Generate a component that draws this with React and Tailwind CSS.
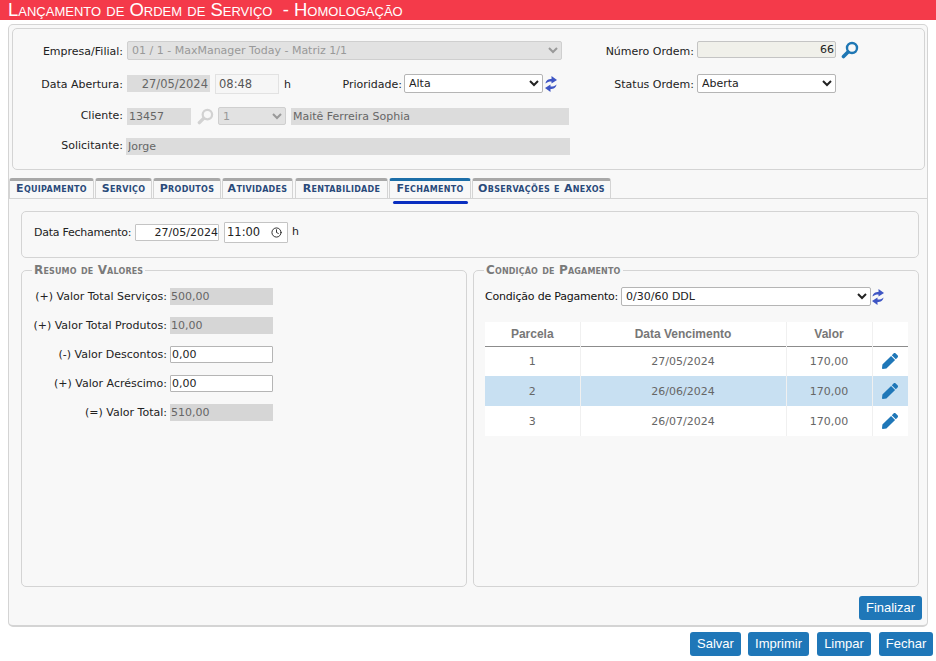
import { FaPen } from 'react-icons/fa';
import { Clock } from 'lucide-react';

const labelCls = 'text-right shrink-0 text-[#222] whitespace-nowrap';
const disabledCls = 'bg-[#dcdcdc] text-[#666] px-[2px] outline-none';
const selectCls = 'h-[19px] bg-white border border-[#b5b5b5] rounded-[2px] text-[#222] outline-none';

function Lens({ className, color = '#1f77b4' }) {
  return (
    <svg viewBox="0 0 18 18" className={className} fill="none">
      <circle cx="11" cy="7" r="5" stroke={color} strokeWidth="2.4" />
      <path d="M7 11 L2.5 15.5" stroke={color} strokeWidth="3.6" strokeLinecap="round" />
    </svg>
  );
}

function Refresh({ className }) {
  return (
    <svg viewBox="0 0 12 16" className={className} fill="#3f56c4">
      <path d="M0.5 7.6 C0.8 4.4 3.5 3 6.5 3 L6.5 0 L12 3.9 L6.5 7.4 L6.5 5.4 C4 5.4 2 6 0.5 7.6 Z" />
      <path d="M0.5 7.6 C0.8 4.4 3.5 3 6.5 3 L6.5 0 L12 3.9 L6.5 7.4 L6.5 5.4 C4 5.4 2 6 0.5 7.6 Z" transform="rotate(180 6 8)" />
    </svg>
  );
}

function Tab({ label, active, width }) {
  return (
    <div
      className={`relative h-[20px] flex items-center justify-center bg-[#f8f8f8] border border-b-0 border-[#d4d4d4] border-t-[3px] rounded-t-[3px] font-bold text-[#2a4a7a] [font-variant:small-caps] text-[11px] tracking-[0.3px] ${active ? 'border-t-[#1c6ea8]' : 'border-t-[#a8a8a8]'} ${width}`}
    >
      <span className="-mt-[1px]">{label}</span>
      {active && <div className="absolute left-[3px] right-[2px] top-[20px] h-[3px] rounded-[2px] bg-[#0a2fc0]" />}
    </div>
  );
}

function Btn({ children, className = '' }) {
  return (
    <button className={`h-[24px] rounded-[3px] bg-[#1f77b8] text-white text-[13px] [font-family:'Liberation_Sans',sans-serif] ${className}`}>
      {children}
    </button>
  );
}

function Fieldset({ title, className, children }) {
  return (
    <fieldset className={`border border-[#d4d4d4] rounded-[5px] ${className}`}>
      <legend className="ml-[10px] px-[2px] text-[12px] leading-[13px] font-bold text-[#7a7a7a] [font-variant:small-caps] tracking-[0.15px]">{title}</legend>
      {children}
    </fieldset>
  );
}

function ValueRow({ label, value, editable }) {
  return (
    <div className="h-[18px] flex items-center gap-[3px]">
      <span className={`${labelCls} w-[145px] pt-[1px]`}>{label}</span>
      <input
        readOnly
        value={value}
        className={`w-[103px] h-[17px] px-[1px] outline-none ${editable ? 'bg-white border border-[#b5b5b5] rounded-[1px] text-[#222]' : 'bg-[#d6d6d6] text-[#666]'}`}
      />
    </div>
  );
}

const rows = [
  { n: '1', d: '27/05/2024' },
  { n: '2', d: '26/06/2024', hi: true },
  { n: '3', d: '26/07/2024' },
];

export default function App() {
  return (
    <div className="w-[936px] h-[661px] bg-white overflow-hidden text-[11px] leading-[14px] [font-family:'DejaVu_Sans',sans-serif]">
      <div className="h-[20px] bg-[#f43a4a] pl-[8px] text-white text-[18.5px] leading-[20px] [font-variant:small-caps] [font-family:'Liberation_Sans',sans-serif] whitespace-pre">
        Lançamento de Ordem de Serviço  - Homologação
      </div>

      <div className="mt-[4px] ml-[8px] w-[920px] h-[603px] border border-[#d4d4d4] border-b-2 rounded-[5px] bg-[#f8f8f8] pt-[3px]">
        <div className="ml-[3px] w-[913px] h-[142px] border border-[#d4d4d4] rounded-[5px] pt-[12px] flex flex-col">
          <div className="flex items-start h-[19px]">
            <span className={`${labelCls} w-[110px] pt-[4px]`}>Empresa/Filial:</span>
            <select disabled className="ml-[4px] w-[435px] h-[19px] bg-[#e2e2e2] border border-[#cfcfcf] rounded-[2px] text-[#999] outline-none">
              <option>01 / 1 - MaxManager Today - Matriz 1/1</option>
            </select>
            <span className={`${labelCls} w-[132px] pt-[4px]`}>Número Ordem:</span>
            <input readOnly value="66" className="ml-[3px] w-[139px] h-[17px] bg-[#f0f0ea] border border-[#c4c4c4] rounded-[2px] text-right pr-[1px] text-[#222] outline-none" />
            <Lens className="ml-[5px] w-[18px] h-[18px]" />
          </div>

          <div className="mt-[14px] flex items-center h-[19px]">
            <span className={`${labelCls} w-[110px] pt-[2px]`}>Data Abertura:</span>
            <input readOnly value="27/05/2024" className={`ml-[4px] w-[83px] h-[17px] text-right text-[11.5px] ${disabledCls}`} />
            <input readOnly value="08:48" className="ml-[5px] w-[64px] h-[20px] px-[3px] bg-[#f6f6f6] border border-[#e2e2e2] text-[#555] text-[11.5px] outline-none" />
            <span className="ml-[5px] w-[14px] text-[#222] pt-[2px]">h</span>
            <span className={`${labelCls} w-[104px] pt-[2px]`}>Prioridade:</span>
            <select className={`ml-[2px] w-[139px] ${selectCls}`}>
              <option>Alta</option>
            </select>
            <Refresh className="ml-[2px] w-[12px] h-[16px]" />
            <span className={`${labelCls} w-[137px] pt-[2px]`}>Status Ordem:</span>
            <select className={`ml-[3px] w-[139px] ${selectCls}`}>
              <option>Aberta</option>
            </select>
          </div>

          <div className="mt-[14px] flex items-center h-[18px]">
            <span className={`${labelCls} w-[110px]`}>Cliente:</span>
            <input readOnly value="13457" className={`ml-[4px] w-[64px] h-[17px] ${disabledCls}`} />
            <Lens className="ml-[6px] w-[17px] h-[17px]" color="#d2d2d2" />
            <select disabled className="ml-[4px] w-[68px] h-[18px] bg-[#e2e2e2] border border-[#cfcfcf] rounded-[2px] text-[#999] outline-none">
              <option>1</option>
            </select>
            <input readOnly value="Maitê Ferreira Sophia" className={`ml-[5px] w-[278px] h-[17px] ${disabledCls}`} />
          </div>

          <div className="mt-[12px] flex items-center h-[18px]">
            <span className={`${labelCls} w-[110px]`}>Solicitante:</span>
            <input readOnly value="Jorge" className={`ml-[3px] w-[444px] h-[17px] ${disabledCls}`} />
          </div>
        </div>

        <div className="mt-[8px] flex gap-[1px] border-b border-[#d4d4d4] h-[21px]">
          <Tab label="Equipamento" width="w-[85px]" />
          <Tab label="Serviço" width="w-[57px]" />
          <Tab label="Produtos" width="w-[68px]" />
          <Tab label="Atividades" width="w-[71px]" />
          <Tab label="Rentabilidade" width="w-[93px] ml-[1px]" />
          <Tab label="Fechamento" width="w-[82px]" active />
          <Tab label="Observações e Anexos" width="w-[139px]" />
        </div>

        <div className="pt-[12px] pl-[12px] pr-[8px]">
          <div className="w-[898px] h-[47px] border border-[#d4d4d4] rounded-[5px] flex items-center pl-[12px] pb-[5px]">
            <span className="w-[98px] shrink-0 pt-[2px] text-[#222] whitespace-nowrap tracking-[-0.25px]">Data Fechamento:</span>
            <input readOnly value="27/05/2024" className="ml-[3px] w-[84px] h-[17px] bg-white border border-[#c4c4c4] rounded-[1px] text-right text-[#222] outline-none" />
            <div className="ml-[5px] w-[64px] h-[21px] bg-white border border-[#c4c4c4] rounded-[1px] flex items-center justify-between px-[2px] text-[#222] text-[11.5px]">
              <span>11:00</span>
              <Clock className="w-[11px] h-[11px] mr-[3px]" strokeWidth={2} />
            </div>
            <span className="ml-[4px] text-[#222]">h</span>
          </div>

          <div className="mt-[6px] flex gap-[6px]">
            <Fieldset title="Resumo de Valores" className="w-[446px] h-[323px]">
              <div className="pt-[10px] flex flex-col gap-[11px]">
                <ValueRow label="(+) Valor Total Serviços:" value="500,00" />
                <ValueRow label="(+) Valor Total Produtos:" value="10,00" />
                <ValueRow label="(-) Valor Descontos:" value="0,00" editable />
                <ValueRow label="(+) Valor Acréscimo:" value="0,00" editable />
                <ValueRow label="(=) Valor Total:" value="510,00" />
              </div>
            </Fieldset>

            <Fieldset title="Condição de Pagamento" className="w-[446px] h-[323px]">
              <div className="pt-[10px] pl-[11px] flex items-center h-[29px]">
                <span className="w-[133px] shrink-0 text-[#111] whitespace-nowrap tracking-[-0.2px]">Condição de Pagamento:</span>
                <select className={`ml-[3px] w-[250px] ${selectCls}`}>
                  <option>0/30/60 DDL</option>
                </select>
                <Refresh className="ml-[1px] w-[12px] h-[16px]" />
              </div>
              <table className="mt-[16px] ml-[11px] w-[423px] table-fixed border-collapse text-[#666]">
                <thead>
                  <tr className="h-[24px] bg-white border-b border-[#8c8c8c] text-[12px] text-[#777] [font-family:'Liberation_Sans',sans-serif]">
                    <th className="w-[95px] pt-[1px] font-bold border-r border-[#f0f0f0]">Parcela</th>
                    <th className="w-[206px] pt-[1px] font-bold border-r border-[#f0f0f0]">Data Vencimento</th>
                    <th className="w-[86px] pt-[1px] font-bold border-r border-[#f0f0f0]">Valor</th>
                    <th />
                  </tr>
                </thead>
                <tbody>
                  {rows.map((r) => (
                    <tr key={r.n} className={`h-[30px] text-center ${r.hi ? 'bg-[#c8e0f2]' : 'bg-white'}`}>
                      <td className="pt-[1px] border-r border-[#f0f0f0]">{r.n}</td>
                      <td className="pt-[1px] border-r border-[#f0f0f0]">{r.d}</td>
                      <td className="pt-[1px] border-r border-[#f0f0f0]">170,00</td>
                      <td>
                        <FaPen className="mx-auto w-[16px] h-[16px] text-[#1f77b8]" />
                      </td>
                    </tr>
                  ))}
                </tbody>
              </table>
            </Fieldset>
          </div>

          <div className="mt-[9px] flex justify-end">
            <Btn className="w-[63px] -mr-[3px]">Finalizar</Btn>
          </div>
        </div>
      </div>

      <div className="mt-[5px] pr-[3px] flex justify-end gap-[7px]">
        <Btn className="w-[51px]">Salvar</Btn>
        <Btn className="w-[61px]">Imprimir</Btn>
        <Btn className="w-[54px] ml-[1px]">Limpar</Btn>
        <Btn className="w-[54px] ml-[1px]">Fechar</Btn>
      </div>
    </div>
  );
}
